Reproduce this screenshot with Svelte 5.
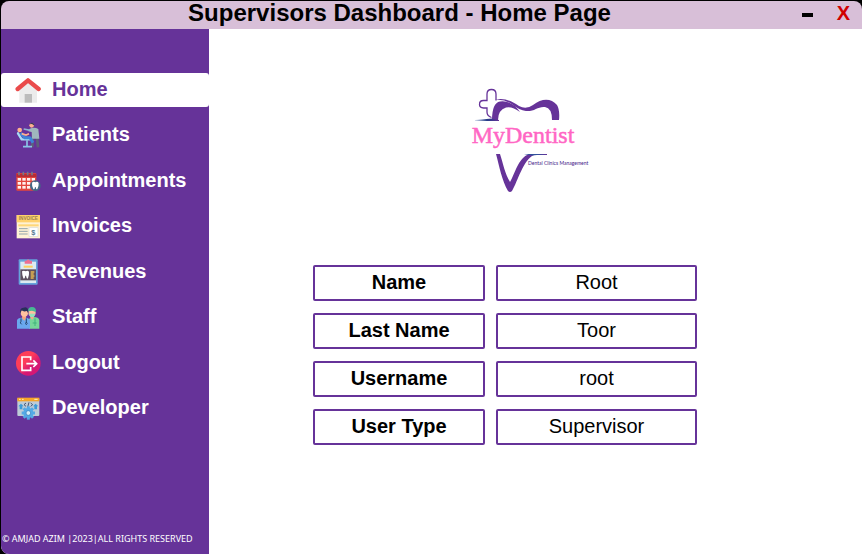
<script>
  const items = ['Home', 'Patients', 'Appointments', 'Invoices', 'Revenues', 'Staff', 'Logout', 'Developer'];
  const fields = [
    { id: 'name', label: 'Name', value: 'Root' },
    { id: 'last-name', label: 'Last Name', value: 'Toor' },
    { id: 'username', label: 'Username', value: 'root' },
    { id: 'user-type', label: 'User Type', value: 'Supervisor' }
  ];
  const cells = [0, 1, 2, 3];
  const teeth = [0, 45, 90, 135];
  let active = $state('Home');
</script>

<div class="window">
  <header>
    <h1>Supervisors Dashboard - Home Page</h1>
    <div class="controls">
      <button class="minimize" aria-label="Minimize"><span></span></button>
      <button class="close" aria-label="Close">X</button>
    </div>
  </header>

  <div class="body">
    <aside>
      <nav>
        {#each items as item}
          <button class="item" class:active={active === item} onclick={() => (active = item)}>
            <svg viewBox="0 0 78 78" aria-hidden="true">
              {#if item === 'Home'}
                <path d="M13 32L39 12L66 32V77H13Z" fill="#ececec" />
                <rect x="29" y="51" width="22" height="26" fill="#bcbcbc" />
                <path d="M8 36L39 10L71 36" fill="none" stroke="#ea4b4b" stroke-width="13" stroke-linecap="round" stroke-linejoin="round" />
              {:else if item === 'Patients'}
                <path d="M53 44L52 76M66 44L69 76" stroke="#5c6079" stroke-width="8" />
                <path d="M44 20Q58 14 70 21L73 50H51L50 30L40 28Z" fill="#9fb7bd" />
                <path d="M46 25L26 21" stroke="#8fb5d2" stroke-width="5" />
                <circle cx="50" cy="10" r="7" fill="#ffb08f" />
                <path d="M43 7Q49-2 57 5L58 11L51 6Z" fill="#3d3c5c" />
                <path d="M9 34L20 52H48" fill="none" stroke="#a5dcf5" stroke-width="7" stroke-linecap="round" />
                <path d="M17 33L29 47H45L54 62" fill="none" stroke="#3d83d8" stroke-width="9" stroke-linejoin="round" />
                <path d="M20 35L33 39L42 35" fill="none" stroke="#ffb08f" stroke-width="5" />
                <circle cx="14" cy="24" r="7" fill="#ffb08f" />
                <path d="M36 55V73M24 74H51" stroke="#8ac5e6" stroke-width="5" />
              {:else if item === 'Appointments'}
                <rect x="4" y="15" width="60" height="53" rx="3" fill="#e3463d" />
                <path d="M4 27V17H64V27Z" fill="#b72d35" />
                {#each cells as x}
                  <path d="M{12 + x * 13} 11V22" stroke="#71798c" stroke-width="5" />
                  {#each cells.slice(0, 3) as y}
                    <rect x={8 + x * 14} y={30 + y * 12} width="10" height="8" fill="#fff0ed" />
                  {/each}
                {/each}
                <circle cx="61" cy="53" r="16" fill="#446886" />
                <path d="M51 44Q56 39 61 43Q67 39 71 45Q72 52 67 63Q63 66 62 57H60Q59 66 55 63Q50 53 51 44Z" fill="#fff" />
              {:else if item === 'Invoices'}
                <rect x="5" y="6" width="70" height="70" fill="#fff2d5" />
                <rect x="5" y="6" width="70" height="22" fill="#ffd16c" />
                <text x="40" y="22" text-anchor="middle" font-size="14" font-weight="bold" fill="#9a8252">INVOICE</text>
                <rect x="10" y="34" width="61" height="6" fill="#ffd778" />
                <path d="M12 47H38M12 55H38M12 63H38" stroke="#91a4ad" stroke-width="3" />
                <rect x="42" y="44" width="27" height="26" fill="#fff" stroke="#d8dbd6" stroke-width="2" />
                <text x="55" y="65" text-anchor="middle" font-size="22" fill="#587b91">$</text>
              {:else if item === 'Revenues'}
                <rect x="11" y="1" width="57" height="76" rx="3" fill="#66a3dc" />
                <rect x="16" y="8" width="47" height="64" fill="#dceaf1" />
                <path d="M29 14V5H34Q39-2 45 5H51V14Z" fill="#ed6f91" />
                <path d="M26 23H53" stroke="#ffd15e" stroke-width="6" />
                <rect x="16" y="31" width="47" height="33" fill="#5e505e" />
                <path d="M21 37Q27 33 32 37Q38 33 42 38Q43 46 39 58Q35 62 33 50H31Q29 62 25 58Q21 47 21 37Z" fill="#fff" />
                <path d="M47 39H58M47 45H56M47 51H58M47 57H56" stroke="#e8b850" stroke-width="4" />
              {:else if item === 'Staff'}
                <path d="M42 74V45Q47 39 56 39Q71 39 73 48V74H45Z" fill="#76d79a" />
                <path d="M47 31H56V41L51 48L46 40Z" fill="#f4ab88" />
                <circle cx="51" cy="26" r="11" fill="#ffc19f" />
                <path d="M39 22Q39 9 51 9Q64 9 63 24L51 20Z" fill="#48b993" />
                <path d="M42 29H61L57 39H46Z" fill="#91e3bd" />
                <path d="M6 74V49Q8 41 20 41H34Q45 43 45 53V74Z" fill="#6aa8ef" />
                <path d="M22 34H33V43L28 50L21 43Z" fill="#f4a47d" />
                <circle cx="28" cy="27" r="11" fill="#ffc19f" />
                <path d="M16 29Q13 10 26 11Q41 6 40 29L36 21Q25 24 20 19Z" fill="#292f59" />
                <path d="M18 43V52Q13 57 20 61M34 43V54Q39 59 34 62Q29 59 34 54" fill="none" stroke="#284771" stroke-width="3" />
                <path d="M60 43V66M53 57H65" stroke="#41b47a" stroke-width="3" />
              {:else if item === 'Logout'}
                <defs>
                  <linearGradient id="exit-fill" x1="0" y1="0" x2="1" y2="1">
                    <stop offset="0.4" stop-color="#ff3d58" />
                    <stop offset="0.65" stop-color="#d51774" />
                  </linearGradient>
                </defs>
                <circle cx="40" cy="40" r="37" fill="url(#exit-fill)" />
                <path d="M47 31V21H21V61H47V51M34 41H64M55 31L65 41L55 51" fill="none" stroke="#fff" stroke-width="5" />
              {:else}
                <rect x="7" y="9" width="66" height="54" rx="3" fill="#bdcbd7" />
                <path d="M7 19V8H73V19Z" fill="#f6a529" />
                <path d="M12 13H17M21 13H26M58 13H68" stroke="#fff0bf" stroke-width="3" />
                <path d="M33 24L27 29L33 34M47 24L53 29L47 34M42 22L38 36" fill="none" stroke="#455675" stroke-width="3" />
                <path d="M18 26L10 34H14V43H22V34H26ZM62 26L54 34H58V43H66V34H70Z" fill="#3b9ad7" />
                {#each teeth as angle}
                  <path d="M40 34V74" stroke="#54a9e5" stroke-width="9" transform="rotate({angle} 40 54)" />
                {/each}
                <circle cx="40" cy="54" r="15" fill="#54a9e5" />
                <circle cx="40" cy="54" r="7" fill="#d4edf8" stroke="#3480be" stroke-width="2" />
              {/if}
            </svg>
            <span>{item}</span>
          </button>
        {/each}
      </nav>
      <footer>© AMJAD AZIM |2023|ALL RIGHTS RESERVED</footer>
    </aside>

    <main>
      <svg class="logo" viewBox="425 84 160 112" role="img" aria-label="MyDentist Dental Clinics Management">
        <defs>
          <linearGradient id="line-fade">
            <stop offset="0" stop-color="#30549a" stop-opacity="0.2" />
            <stop offset="0.5" stop-color="#253b88" />
            <stop offset="1" stop-color="#663399" />
          </linearGradient>
        </defs>
        <path d="M496 100.500V94Q496 89.500 491.500 89.500Q487 89.500 487 94V100.500H483.500Q479.500 100.500 479.500 104.300Q479.500 108 483.500 108H487V112Q487 116 491.500 117.500" fill="none" stroke="#663399" stroke-width="1.300" />
        <path d="M492 120Q492 103 500 101.500Q512 100 520 112Q512 106 506 107.500Q498 110 498 120Z" fill="#663399" />
        <path d="M495 100C503 97 512 101 519 106Q526 110 533 105C542 98 551 98 557 105Q560 110 559 120H552Q552 108 545 107C538 106 534 112 526 111Q519 110 513 105Q505 99 495 100Z" fill="#663399" />
        <path d="M475 120L492 118.500L499 120V121H475Z" fill="url(#line-fade)" />
        <text class="brand" x="523" y="143" text-anchor="middle">MyDentist</text>
        <path d="M496 154H500C503 163 505 174 510 182C515 174 518 158 529 154H547V155H534C523 160 518 181 512 191Q510 193 508 191C502 181 499 165 496 154Z" fill="#663399" />
        <path d="M524 154H547L532 155.500Z" fill="#31509b" />
        <text class="tagline" x="528" y="165">Dental Clinics Management</text>
      </svg>

      <form>
        {#each fields as field}
          <label for={field.id}>{field.label}</label>
          <input id={field.id} value={field.value} readonly />
        {/each}
      </form>
    </main>
  </div>
</div>

<style>
  :global(body) {
    margin: 0;
    background: #000;
  }
  .window {
    box-sizing: border-box;
    min-height: 100vh;
    padding: 1px 0 0 1px;
    display: flex;
    flex-direction: column;
    background: #000;
    color: #000;
    font-family: "Liberation Sans", Arial, sans-serif;
    font-size: 20px;
  }
  button {
    border: 0;
    padding: 0;
    background: none;
    font: inherit;
    cursor: pointer;
  }
  header {
    height: 28px;
    display: grid;
    grid-template-columns: 64px 1fr 64px;
    align-items: center;
    background: #d8bfd8;
    border-radius: 8px 8px 0 0;
  }
  h1 {
    grid-column: 2;
    margin: 0;
    padding-right: 64px;
    font-size: 24px;
    line-height: 24px;
    font-weight: bold;
    text-align: center;
    padding-bottom: 4px;
  }
  .controls {
    display: flex;
    align-items: center;
    justify-content: space-between;
    padding: 0 12px 4px 4px;
  }
  .minimize {
    height: 24px;
    display: flex;
    align-items: center;
    padding-top: 4px;
  }
  .minimize span {
    width: 11px;
    height: 4px;
    background: #000;
  }
  .close {
    color: #d00000;
    font-weight: bold;
    line-height: 24px;
  }
  .body {
    flex: 1;
    display: flex;
    background: #fff;
    border-radius: 0 0 0 8px;
    overflow: hidden;
  }
  aside {
    box-sizing: border-box;
    width: 208px;
    padding-top: 44px;
    display: flex;
    flex-direction: column;
    justify-content: space-between;
    background: #663399;
  }
  nav {
    height: 352px;
    display: flex;
    flex-direction: column;
    justify-content: space-between;
  }
  .item {
    height: 34px;
    display: flex;
    align-items: center;
    gap: 11px;
    padding-left: 14px;
    border-radius: 3px;
    color: #fff;
    font-weight: bold;
  }
  .item.active {
    background: #fff;
    color: #663399;
  }
  .item svg {
    width: 26px;
    height: 26px;
    flex: none;
  }
  .item span {
    line-height: 24px;
    padding-bottom: 2px;
  }
  footer {
    padding: 0 0 8px 1px;
    color: #fff;
    font-family: "Noto Sans", sans-serif;
    font-size: 9px;
    line-height: 14px;
    white-space: nowrap;
  }
  main {
    flex: 1;
    display: flex;
    flex-direction: column;
    align-items: center;
    gap: 69px;
    padding: 55px 61px 24px 0;
  }
  .logo {
    width: 160px;
    height: 112px;
    overflow: visible;
  }
  .brand {
    font-family: "Liberation Serif", serif;
    font-size: 24px;
    fill: #ff66c4;
    stroke: #ff66c4;
    stroke-width: 0.5px;
  }
  .tagline {
    font-family: Lato, sans-serif;
    font-size: 5px;
    fill: #442088;
  }
  form {
    display: grid;
    grid-template-columns: 172px 201px;
    gap: 12px 11px;
  }
  label,
  input {
    box-sizing: border-box;
    width: 100%;
    height: 36px;
    margin: 0;
    padding: 0 0 2px;
    border: 2px solid #663399;
    border-radius: 2px;
    background: #fff;
    color: #000;
    font: inherit;
    line-height: 30px;
    text-align: center;
  }
  label {
    font-weight: bold;
  }
  input {
    outline: 0;
  }
</style>
